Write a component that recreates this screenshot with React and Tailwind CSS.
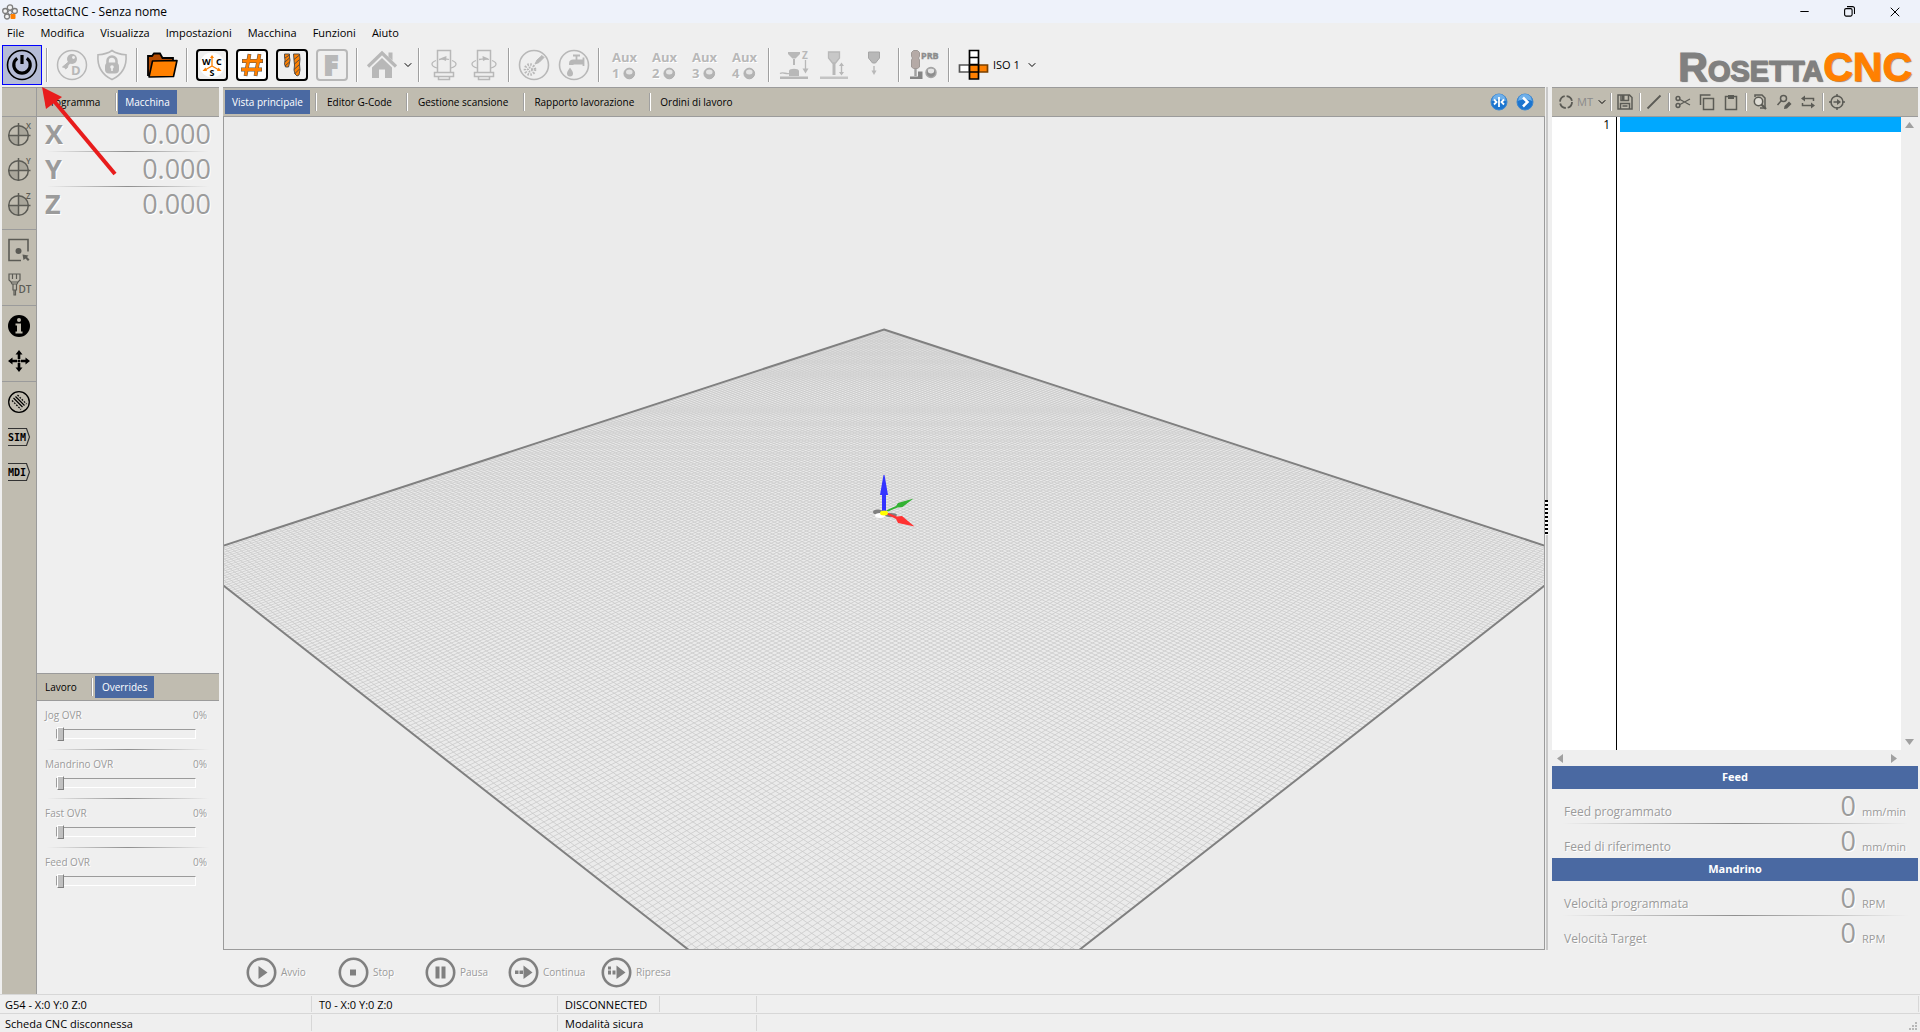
import React from 'react';
import { ChevronDown, Minus, X } from 'lucide-react';

const GREY = '#b8b8b8';
const ORANGE = '#ff8000';

/* ---------- shared bits ---------- */

const ToolSeparator = () => (
  <div className="w-[10px] h-[34px] flex justify-center shrink-0">
    <div className="w-[2px] bg-[#a0a0a0] border-r border-white" />
  </div>
);

const BarSeparator = () => (
  <div className="w-[5px] h-[18px] flex justify-center shrink-0">
    <div className="w-[2px] bg-[#a0a0a0] border-r border-white" />
  </div>
);

const Divider = () => (
  <div className="h-px mx-[10px] bg-linear-to-r from-transparent via-[#8f8f8f] to-transparent" />
);

const ToolButton = ({ label, active, children }) => (
  <button
    type="button"
    aria-label={label}
    className={
      active
        ? 'w-10 h-10 shrink-0 flex items-center justify-center bg-[#b5bcd6] border border-[#0000ff]'
        : 'w-10 h-10 shrink-0 flex items-center justify-center'
    }
  >
    {children}
  </button>
);

const Icon = ({ size = 32, children }) => (
  <svg width={size} height={size} viewBox={`0 0 ${size} ${size}`} fill="none" className="shrink-0 overflow-visible">
    {children}
  </svg>
);

const Tab = ({ active, children }) => (
  <button
    type="button"
    role="tab"
    aria-selected={!!active}
    className={
      active
        ? 'self-stretch my-[2px] px-[7px] text-[10px] whitespace-nowrap bg-[#4a69a2] text-white'
        : 'self-stretch my-[2px] pl-2 pr-[13px] text-[10px] whitespace-nowrap text-black'
    }
  >
    {children}
  </button>
);

/* ---------- toolbar icons ---------- */

const PowerIcon = () => (
  <Icon>
    <circle cx="16" cy="16" r="14.5" stroke="#000" strokeWidth="1.6" />
    <path d="M11.2 9.2a8.2 8.2 0 1 0 9.6 0" stroke="#000" strokeWidth="3.2" />
    <path d="M16 6v9" stroke="#000" strokeWidth="3.2" />
  </Icon>
);

const KeyIcon = () => (
  <Icon>
    <circle cx="16" cy="16" r="14.5" stroke={GREY} strokeWidth="1.5" />
    <circle cx="16" cy="10" r="5" fill={GREY} />
    <circle cx="17.5" cy="8.5" r="1.4" fill="#efefef" />
    <path d="M13 12.5 6.5 18l2.5.5.5 1.5 2-1.5.5-2.5 3-2.5z" fill={GREY} stroke={GREY} />
    <text x="15" y="26" fontSize="13" fontWeight="700" fill={GREY}>D</text>
  </Icon>
);

const ShieldIcon = () => (
  <Icon>
    <path d="M16 1.5c4 3 9 4 14 4.2 1 12-4 20-14 24.8C6 25.7 1 17.7 2 5.7c5-.2 10-1.2 14-4.2z" stroke={GREY} strokeWidth="1.6" />
    <path d="M11.5 15v-3a4.5 4.5 0 0 1 9 0v3" stroke={GREY} strokeWidth="2.6" />
    <rect x="9" y="13.5" width="14" height="11" rx="4" fill={GREY} />
    <circle cx="16" cy="18" r="1.8" fill="#efefef" />
    <path d="M16 18v4" stroke="#efefef" strokeWidth="1.6" />
  </Icon>
);

const FolderIcon = () => (
  <Icon>
    <path d="M2 27V7h4l2-2.5h6L16.5 9H27v5" fill="#b34a00" stroke="#000" strokeWidth="1.8" />
    <path d="M6.5 12 31 11.5 27.5 27.5 3 28z" fill={ORANGE} stroke="#000" strokeWidth="1.6" strokeLinejoin="round" />
  </Icon>
);

const Framed = ({ color = '#000', fill = '#fff', children }) => (
  <Icon>
    <rect x="1" y="1" width="30" height="30" rx="3" fill={fill} stroke={color} strokeWidth="2" />
    {children}
  </Icon>
);

const WcsIcon = () => (
  <Framed fill="#efefef">
    <circle cx="16" cy="16" r="12.5" fill="#fff" />
    <path d="M16 17V8M16 17l-7 4M16 17l7 4" stroke={ORANGE} strokeWidth="1.3" />
    <path d="m14 9 2-3 2 3zM9.5 18.500 6.500 22H11zM22.5 18.500 25.500 22H21z" fill={ORANGE} />
    <g fontSize="9" fontWeight="700" fill="#000">
      <text x="6" y="16">W</text>
      <text x="20" y="16">C</text>
      <text x="13.5" y="27">S</text>
    </g>
  </Framed>
);

const HashIcon = () => (
  <Framed>
    <path d="M13.5 5 9.5 27M23.5 5l-4 22M6 12h21M5 20.5h21" stroke="#555" strokeWidth="3.8" />
    <path d="M13.5 5.5 9.5 26.5M23.5 5.5l-4 21M6.5 12h20M5.5 20.5h20" stroke={ORANGE} strokeWidth="2.8" />
  </Framed>
);

const DrillIcon = () => (
  <Framed fill="#efefef">
    <g stroke="#444" strokeWidth="0.9" fill={ORANGE}>
      <path d="M8.5 5h5v3l.5 3-.5 3-1 4h-3l-1-3 .5-4-.5-3z" />
      <path d="M17.5 5h6l.5 5-.5 5 .5 6-1 5-2 1-2-2-1-4 .5-5-.5-5z" />
      <path d="m9 9 4.500-3M9 13l4.500-4M9 17l4.500-4M18 10.500 23.500 6M18 15.500l5.500-5M18 20.500l5.500-5M18.500 25l5-5" />
    </g>
  </Framed>
);

const FIcon = () => (
  <Framed color={GREY} fill="#efefef">
    <text x="8" y="25.5" fontSize="26" fontWeight="800" fill={GREY} stroke={GREY} strokeWidth="2">F</text>
  </Framed>
);

const HomeIcon = () => (
  <Icon>
    <path d="M2 17.5 16 4l14 13.5" stroke={GREY} strokeWidth="3.2" />
    <path d="M22.5 3.5h4v8l-4-3.5z" fill={GREY} />
    <path d="M6 18.5 16 9l10 9.5V29h-7v-8.5h-6V29H6z" fill={GREY} />
  </Icon>
);

const SpindleIcon = ({ reverse }) => (
  <Icon>
    <path d="M9.5 23V1.5h13V23" stroke={GREY} strokeWidth="1.5" />
    <rect x="6.5" y="23.5" width="19" height="4" stroke={GREY} strokeWidth="1.5" />
    <path d="M10.5 28v2.5h11V28" stroke={GREY} strokeWidth="1.5" />
    <path d="M8 11.5c-5.5 2-5.5 5.5 1 7.5M24 11.5c5.5 2 5.5 5.5-1 7.5M11 10.5c4-1 7-1 10 0" stroke={GREY} strokeWidth="1.3" />
    {reverse ? <path d="m20.5 9.5-6-2.5.5 5z" fill={GREY} /> : <path d="m12 9.5 6.5-2.5-.5 5z" fill={GREY} />}
  </Icon>
);

const MistIcon = () => (
  <Icon>
    <circle cx="16" cy="16" r="14.5" stroke={GREY} strokeWidth="1.6" />
    <path d="m17 15 2-4 5-4.5 2 2L21 13.5z" fill={GREY} stroke={GREY} />
    <circle cx="12" cy="20.5" r="5" stroke={GREY} strokeWidth="2.6" strokeDasharray="1.5 1.4" />
    <circle cx="12" cy="20.5" r="2" stroke={GREY} strokeWidth="2" strokeDasharray="1.5 1" />
  </Icon>
);

const TapIcon = () => (
  <Icon>
    <circle cx="16" cy="16" r="14.5" stroke={GREY} strokeWidth="1.6" />
    <path d="M11 16v-1.5c0-3 2-4 4-4h10v5h-9.500v.5z" fill={GREY} />
    <path d="M15 6.5h7M18.5 6.5V11M25.5 8.5V17" stroke={GREY} strokeWidth="1.8" />
    <path d="M12 18.5c2 3 3 4.500 3 6a3 3 0 0 1-6 0c0-1.500 1-3 3-6z" fill={GREY} />
  </Icon>
);

const Led = () => (
  <svg width="13" height="13" viewBox="0 0 13 13">
    <circle cx="6.5" cy="6.5" r="5.5" fill="#b4b4b4" stroke="#adadad" />
    <ellipse cx="6.5" cy="5" rx="3.4" ry="2.6" fill="#e4e4e4" />
  </svg>
);

const AuxLabel = ({ n }) => (
  <span className="w-6 flex flex-col text-[13px] leading-[16px] font-bold text-[#b8b8b8] [text-shadow:1px_1px_0_#fff]">
    <span>Aux</span>
    <span className="flex items-center gap-1">
      {n}
      <Led />
    </span>
  </span>
);

const ProbeZIcon = () => (
  <Icon>
    <path d="M10 3h12v2l-4.5 4.5h-3L10 5zM15 10h2v6h-2z" fill={GREY} />
    <path d="M11 27v-5c0-3 10-3 10 0v5zM2 27.5h28V30H2z" fill={GREY} />
    <path d="M2 24.5c3-2 6 1 9 0M27.5 11v10" stroke={GREY} strokeWidth="1.3" />
    <path d="M24.5 19.5h6l-3 5z" fill={GREY} />
    <text x="24" y="9.5" fontSize="10" fontWeight="700" fill={GREY}>Z</text>
  </Icon>
);

const ToolLengthIcon = () => (
  <Icon>
    <path d="M10.5 3h11v6l-4 5h-3l-4-5z" fill="#c8c8c8" stroke={GREY} strokeWidth="1.3" />
    <path d="M14.5 14h3v12h-3z" fill={GREY} />
    <path d="M2 27.5h28V30H2z" fill="#c4c4c4" />
    <path d="M23.5 15v10" stroke={GREY} strokeWidth="1.4" />
    <path d="m21 17 2.5-3.5L26 17zM21 23l2.5 3.5L26 23z" fill={GREY} />
  </Icon>
);

const ToolDropIcon = () => (
  <Icon>
    <path d="M10.5 3h11v6l-4 5h-3l-4-5z" fill={GREY} stroke="#a5a5a5" />
    <path d="M16 17v5" stroke={GREY} strokeWidth="1.4" />
    <path d="M13.5 21.5h5L16 26z" fill={GREY} />
  </Icon>
);

const ProbeIcon = () => (
  <Icon>
    <path d="m3.5 3.5 2-2h4l2 2v4l-1 1.5 1 2v7l-2 1.5h-4l-2-1.5v-7l1-2-1-1.5z" fill="#b5aaa6" stroke="#9f9996" />
    <path d="M7.5 20v7" stroke="#a0a0a0" strokeWidth="2.4" />
    <path d="M2 27.5h8v-5h4.5V30H2z" fill="#858585" />
    <text x="13" y="9.5" fontSize="9" fontWeight="700" fill="#8c8c8c" stroke="#8c8c8c" strokeWidth="0.4">PRB</text>
    <circle cx="23" cy="23.5" r="5" fill="#8d8d8d" stroke="#a5a5a5" strokeWidth="1.5" />
    <ellipse cx="23" cy="22" rx="3.2" ry="2.4" fill="#e4e4e4" />
  </Icon>
);

const IsoIcon = () => (
  <Icon>
    <g stroke="#000" strokeWidth="1.7">
      <path d="M11.5 1.5h9v7h-9zM11.5 8.5h9v7h-9z" fill="#fff" />
      <path d="M1.5 16h10v7h-10z" fill="#fff" stroke="#555" />
      <path d="M20.5 16h9v7h-9z" fill={ORANGE} stroke="#7a4000" />
      <path d="M11.5 16h9v7h-9zM11.5 23h9v7h-9z" fill={ORANGE} />
    </g>
  </Icon>
);

/* ---------- side bar icons ---------- */

const OriginIcon = ({ axis }) => (
  <Icon size={26}>
    <path d="M12.5 5a9.5 9.5 0 0 1 9.5 9.5h-9.5zM12.5 14.5V24A9.5 9.5 0 0 1 3 14.5z" fill="#a9a69b" />
    <circle cx="12.5" cy="14.5" r="9.8" stroke="#5b5b55" strokeWidth="1.5" />
    <path d="M12.5 2v23M2 14.5h22.500" stroke="#5b5b55" strokeWidth="1.5" />
    <text x="20" y="8" fontSize="8" fontWeight="600" fill="#5b5b55">{axis}</text>
  </Icon>
);

const SheetIcon = () => (
  <Icon size={26}>
    <path d="M22 14.5v-12H3v21h12" stroke="#5b5b55" strokeWidth="1.6" />
    <circle cx="12.5" cy="14" r="3" fill="#5b5b55" />
    <path d="m16.5 17.5 6 1L21 20l2.5 2.5L22 24l-2.500-2.500-2 1.500z" fill="#5b5b55" />
  </Icon>
);

const ToolDtIcon = () => (
  <Icon size={26}>
    <path d="M3 2h11v6l-2 2H5L3 8zM6.5 2v5M10.500 2v5M5 10l1 2h5l1-2M7 12v6h3.500v-6M8 18v5h1.500v-5" stroke="#5b5b55" strokeWidth="1.2" />
    <text x="12.5" y="21" fontSize="10" fontWeight="600" fill="#5b5b55">DT</text>
  </Icon>
);

const InfoIcon = () => (
  <Icon size={26}>
    <circle cx="13" cy="13" r="11" fill="#000" />
    <circle cx="13" cy="7" r="2" fill="#c0bcb0" />
    <path d="M9.5 10.5H15v8h1.500v2h-7v-2H11v-6H9.500z" fill="#c0bcb0" />
  </Icon>
);

const MoveIcon = () => (
  <Icon size={26}>
    <path d="M13 5v6M13 15v6M5 13h6M15 13h6" stroke="#000" strokeWidth="2.6" />
    <path d="M13 2 9.5 6.5h7zM13 24l-3.5-4.5h7zM2 13l4.5-3.5v7zM24 13l-4.5-3.5v7z" fill="#000" />
    <circle cx="13" cy="13" r="1.6" fill="#000" />
  </Icon>
);

const HatchIcon = () => (
  <Icon size={26}>
    <circle cx="13" cy="13" r="10.3" stroke="#000" strokeWidth="1.3" />
    <path d="m7.5 9 9 9M9.5 7.5l9 9" stroke="#000" strokeWidth="1.2" />
    <path d="m6 11.5 9 9M11.5 6l9 9" stroke="#000" strokeWidth="1.2" strokeDasharray="1.8 1.2" />
  </Icon>
);

const TagIcon = ({ text }) => (
  <Icon size={26}>
    <path d="M2 4.5h18.500L23.500 13l-3 8.500H2" stroke="#333" strokeWidth="1.2" />
    <text x="2" y="16.5" fontSize="10" fontWeight="700" fill="#000" fontFamily="DejaVu Sans Mono, monospace">{text}</text>
  </Icon>
);

/* ---------- header ---------- */

const TitleBar = () => (
  <header className="h-[23px] shrink-0 flex items-center bg-[#eef2fa] pl-[2px]">
    <svg width="16" height="16" viewBox="0 0 16 16" fill="none" className="shrink-0">
      <g stroke="#7d7d7d" strokeWidth="1.3" fill="#f3f3f3">
        <circle cx="8" cy="3.5" r="2.7" />
        <circle cx="3.2" cy="7" r="2.5" />
        <circle cx="12.8" cy="7" r="2.5" />
        <circle cx="5" cy="12.5" r="2.5" />
      </g>
      <circle cx="8" cy="8.5" r="2" stroke="#7d7d7d" />
      <rect x="8.5" y="10" width="5" height="5" rx="1" fill={ORANGE} />
    </svg>
    <h1 className="ml-1 text-[12px]">RosettaCNC - Senza nome</h1>
    <div className="ml-auto mr-[2px] flex">
      <button type="button" aria-label="Riduci" className="w-[46px] flex items-center justify-center"><Minus size={13} strokeWidth={2} /></button>
      <button type="button" aria-label="Ripristina" className="w-[45px] flex items-center justify-center">
        <svg width="11" height="11" viewBox="0 0 11 11" fill="none" stroke="#000" strokeWidth="1.1">
          <rect x="0.6" y="2.6" width="7.5" height="7.5" rx="1.5" />
          <path d="M3 .6h5.500a2 2 0 0 1 2 2V8" />
        </svg>
      </button>
      <button type="button" aria-label="Chiudi" className="w-[46px] flex items-center justify-center"><X size={16} strokeWidth={1.5} /></button>
    </div>
  </header>
);

const MENU = ['File', 'Modifica', 'Visualizza', 'Impostazioni', 'Macchina', 'Funzioni', 'Aiuto'];

const MenuBar = () => (
  <nav className="h-5 shrink-0 flex items-center gap-4 pl-[7px] text-[11px]">
    {MENU.map((item) => (
      <button type="button" key={item}>{item}</button>
    ))}
  </nav>
);

const Toolbar = () => (
  <div className="h-11 shrink-0 flex items-center pl-[2px] pr-2">
    <ToolButton label="Connetti" active><PowerIcon /></ToolButton>
    <ToolSeparator />
    <ToolButton label="Chiave"><KeyIcon /></ToolButton>
    <ToolButton label="Sicurezza"><ShieldIcon /></ToolButton>
    <ToolSeparator />
    <ToolButton label="Apri"><FolderIcon /></ToolButton>
    <ToolSeparator />
    <ToolButton label="WCS"><WcsIcon /></ToolButton>
    <ToolButton label="Parametri"><HashIcon /></ToolButton>
    <ToolButton label="Utensili"><DrillIcon /></ToolButton>
    <ToolButton label="Funzioni"><FIcon /></ToolButton>
    <ToolSeparator />
    <ToolButton label="Home"><HomeIcon /></ToolButton>
    <button type="button" aria-label="Opzioni home" className="w-3"><ChevronDown size={12} strokeWidth={2} /></button>
    <ToolSeparator />
    <ToolButton label="Mandrino antiorario"><SpindleIcon /></ToolButton>
    <ToolButton label="Mandrino orario"><SpindleIcon reverse /></ToolButton>
    <ToolSeparator />
    <ToolButton label="Nebbia"><MistIcon /></ToolButton>
    <ToolButton label="Refrigerante"><TapIcon /></ToolButton>
    <ToolSeparator />
    {[1, 2, 3, 4].map((n) => (
      <ToolButton key={n} label={`Aux ${n}`}><AuxLabel n={n} /></ToolButton>
    ))}
    <ToolSeparator />
    <ToolButton label="Tastatore Z"><ProbeZIcon /></ToolButton>
    <ToolButton label="Lunghezza utensile"><ToolLengthIcon /></ToolButton>
    <ToolButton label="Cambio utensile"><ToolDropIcon /></ToolButton>
    <ToolSeparator />
    <ToolButton label="Sonda"><ProbeIcon /></ToolButton>
    <ToolSeparator />
    <button type="button" className="flex items-center pl-1 text-[11px]">
      <IsoIcon />
      <span className="ml-[3px] mr-[6px]">ISO 1</span>
      <ChevronDown size={12} strokeWidth={2} />
    </button>
    <div className="ml-auto flex items-baseline h-10 leading-[44px] [font-family:'Liberation_Sans',sans-serif] font-bold text-[#808080] [-webkit-text-stroke:1px_currentColor] [text-shadow:1px_1px_1px_#777]">
      <span className="text-[41px]">R</span>
      <span className="text-[29px]">OSETTA</span>
      <span className="text-[41px] text-[#ff8000]">CNC</span>
    </div>
  </div>
);

/* ---------- left side ---------- */

const SideButton = ({ label, children }) => (
  <button type="button" aria-label={label} className="h-[35px] w-full flex items-center justify-center">
    {children}
  </button>
);

const SideBar = () => (
  <aside className="w-[35px] shrink-0 bg-[#c0bcb0] border-t border-r border-[#9b9b9b]">
    <div className="h-[29px] border-b border-[#9b9b9b]" />
    <div className="-mt-px pb-2">
      <SideButton label="Azzera X"><OriginIcon axis="X" /></SideButton>
      <SideButton label="Azzera Y"><OriginIcon axis="Y" /></SideButton>
      <SideButton label="Azzera Z"><OriginIcon axis="Z" /></SideButton>
    </div>
    <div className="pt-[2px] pb-[3px] border-t border-[#9b9b9b]">
      <SideButton label="Punto pezzo"><SheetIcon /></SideButton>
      <SideButton label="Utensile DT"><ToolDtIcon /></SideButton>
    </div>
    <div className="pt-[2px] pb-[3px] border-t border-[#9b9b9b]">
      <SideButton label="Informazioni"><InfoIcon /></SideButton>
      <SideButton label="Jog"><MoveIcon /></SideButton>
    </div>
    <div className="pt-[2px] border-t border-[#9b9b9b]">
      <SideButton label="Percorso"><HatchIcon /></SideButton>
      <SideButton label="Simulazione"><TagIcon text="SIM" /></SideButton>
      <SideButton label="MDI"><TagIcon text="MDI" /></SideButton>
    </div>
  </aside>
);

const OVERRIDES = ['Jog OVR', 'Mandrino OVR', 'Fast OVR', 'Feed OVR'];

const Override = ({ name }) => {
  const id = name.toLowerCase().replace(' ', '-');
  return (
    <div className="h-12 pt-[6px] pl-2 pr-3 text-[10px] leading-[16px] text-[#9b9b9b] [text-shadow:1px_1px_0_#fff]">
      <div className="flex justify-between">
        <label htmlFor={id}>{name}</label>
        <span>0%</span>
      </div>
      <input
        id={id}
        type="range"
        min="0"
        max="200"
        defaultValue="0"
        className="block ml-[11px] mt-1 w-[140px] h-[14px] appearance-none bg-transparent [&::-webkit-slider-runnable-track]:h-[10px] [&::-webkit-slider-runnable-track]:border [&::-webkit-slider-runnable-track]:border-t-[#9b9b9b] [&::-webkit-slider-runnable-track]:border-l-[#9b9b9b] [&::-webkit-slider-runnable-track]:border-r-white [&::-webkit-slider-runnable-track]:border-b-white [&::-webkit-slider-thumb]:appearance-none [&::-webkit-slider-thumb]:w-[7px] [&::-webkit-slider-thumb]:h-[14px] [&::-webkit-slider-thumb]:-mt-[3px] [&::-webkit-slider-thumb]:bg-[#c0c0c0] [&::-webkit-slider-thumb]:border [&::-webkit-slider-thumb]:border-t-white [&::-webkit-slider-thumb]:border-l-white [&::-webkit-slider-thumb]:border-r-[#808080] [&::-webkit-slider-thumb]:border-b-[#808080]"
      />
    </div>
  );
};

const MachinePanel = () => (
  <section className="w-[182px] shrink-0 flex flex-col">
    <div role="tablist" className="h-[30px] flex items-center bg-[#c0bcb0] border-y border-[#9b9b9b]">
      <Tab>Programma</Tab>
      <BarSeparator />
      <Tab active>Macchina</Tab>
    </div>
    {['X', 'Y', 'Z'].map((axis, i) => (
      <React.Fragment key={axis}>
        {i > 0 && <Divider />}
        <div className="flex items-baseline justify-between h-[34px] px-2 leading-[34px] text-[27px] text-[#9b9b9b] [text-shadow:1px_1px_0_#fff]">
          <span className="font-bold">{axis}</span>
          <span>0.000</span>
        </div>
      </React.Fragment>
    ))}
    <div role="tablist" className="mt-auto h-7 shrink-0 flex items-center bg-[#c0bcb0] border-y border-[#9b9b9b]">
      <Tab>Lavoro</Tab>
      <BarSeparator />
      <Tab active>Overrides</Tab>
    </div>
    <div className="h-[293px] shrink-0">
      {OVERRIDES.map((name, i) => (
        <React.Fragment key={name}>
          {i > 0 && <Divider />}
          <Override name={name} />
        </React.Fragment>
      ))}
    </div>
  </section>
);

/* ---------- viewport ---------- */

// Corners of the work plane and the weight of the side corners in the perspective
const TOP = [660, 212.5];
const RIGHT = [1356.5, 440.4];
const LEFT = [-36.5, 440.4];
const WEIGHT = 0.7089;
const CELLS = 200;

const project = (u, v) => {
  const w = 1 + (u + v) * (WEIGHT - 1);
  return [0, 1]
    .map((k) => ((TOP[k] + u * (WEIGHT * RIGHT[k] - TOP[k]) + v * (WEIGHT * LEFT[k] - TOP[k])) / w).toFixed(2))
    .join(' ');
};

const gridPath = () => {
  const parts = [];
  for (let i = 0; i <= CELLS; i += 1) {
    const t = i / CELLS;
    parts.push(`M${project(t, 0)}L${project(t, 1)}M${project(0, t)}L${project(1, t)}`);
  }
  return parts.join('');
};

const outline = `M${project(0, 0)}L${project(1, 0)}L${project(1, 1)}L${project(0, 1)}Z`;

const Viewport = () => (
  <div className="flex-1 min-h-0 bg-[#ebebeb] border-x border-b border-[#9b9b9b]">
    <svg viewBox="0 0 1320 832" preserveAspectRatio="xMidYMid slice" className="block w-full h-full" fill="none">
      <path d={gridPath()} stroke="#cacaca" strokeWidth="0.8" />
      <path d={outline} stroke="#808080" strokeWidth="2" />
      {/* axes */}
      <g transform="translate(0 1)">
        <ellipse cx="654" cy="394" rx="5" ry="2.5" fill="#808080" />
        <ellipse cx="667" cy="397" rx="6" ry="2" fill="#808080" />
        <ellipse cx="656" cy="397.5" rx="5" ry="2.5" fill="#fff" />
        <path d="M662 392.5 672 388l2-3 15.500-4.500-11 8.500-5 .5-9.500 4z" fill="#33b233" />
        <path d="m662 396 10 5 2 4 16.500 3.500L678 398l-5 .5-10-4z" fill="#ff3333" />
        <path d="M658 393v-16h-2l3.500-20h1L664 377h-2v16z" fill="#3333ff" />
        <ellipse cx="660" cy="395" rx="4" ry="2.5" fill="#ffff00" />
      </g>
    </svg>
  </div>
);

const Orb = ({ children }) => (
  <svg width="18" height="18" viewBox="0 0 18 18" fill="none" stroke="#fff" strokeWidth="1.8">
    <circle cx="9" cy="9" r="8" fill="#1c75cf" stroke="#3d87d0" strokeWidth="1" />
    <path d="M2 8a7 7 0 0 1 14 0c-4-2-10-2-14 0z" fill="#6fb0ea" stroke="none" />
    {children}
  </svg>
);

const VIEW_TABS = ['Vista principale', 'Editor G-Code', 'Gestione scansione', 'Rapporto lavorazione', 'Ordini di lavoro'];

const PLAYER = [
  { label: 'Avvio', width: 'w-[92px]', icon: <path d="M12.5 9v13l9-6.500z" fill="#808080" /> },
  { label: 'Stop', width: 'w-[87px]', icon: <path d="M12 12.5h6v6h-6z" fill="#808080" /> },
  { label: 'Pausa', width: 'w-[83px]', icon: <path d="M10.5 9.5h4v12h-4zM16.5 9.5h4v12h-4z" fill="#808080" /> },
  { label: 'Continua', width: 'w-[93px]', icon: <path d="M7 13.5h3.500V17H7zM11.500 13.500H15V17h-3.500zM15.500 8.500V22l9-6.500z" fill="#808080" /> },
  { label: 'Ripresa', width: 'w-[93px]', icon: <path d="M7 9.5h3v3H7zM7 13.500h3v4H7zM11.500 13.500h3v4h-3zM15.500 8.500V22l9-6.500z" fill="#808080" /> },
];

const MainArea = () => (
  <main className="flex-1 min-w-0 flex flex-col">
    <div className="h-[30px] shrink-0 flex items-center bg-[#c0bcb0] border-y border-[#9b9b9b] pl-[2px] pr-[11px]">
      <div role="tablist" className="h-full flex items-center">
        {VIEW_TABS.map((tab, i) => (
          <React.Fragment key={tab}>
            {i === 1 && <div className="w-1" />}
            {i > 0 && <BarSeparator />}
            <Tab active={i === 0}>{tab}</Tab>
          </React.Fragment>
        ))}
      </div>
      <div className="ml-auto flex gap-2">
        <button type="button" aria-label="Centra"><Orb><path d="M9 4v10M4 6.5 6.5 9 4 11.5M14 6.5 11.5 9l2.5 2.5" /></Orb></button>
        <button type="button" aria-label="Avanti"><Orb><path d="M7 4.5 11.5 9 7 13.5" strokeWidth="2.5" /></Orb></button>
      </div>
    </div>
    <Viewport />
    <div className="h-11 shrink-0 flex items-center pl-[23px]">
      {PLAYER.map(({ label, width, icon }) => (
        <button
          type="button"
          key={label}
          className={`${width} flex items-center gap-1 text-[10px] text-[#9b9b9b] [text-shadow:1px_1px_0_#fff]`}
        >
          <svg width="31" height="31" viewBox="0 0 31 31" fill="none" className="shrink-0">
            <circle cx="15.5" cy="15.5" r="13.7" stroke="#808080" strokeWidth="2.6" />
            {icon}
          </svg>
          {label}
        </button>
      ))}
    </div>
  </main>
);

const Splitter = () => (
  <div className="w-[7px] shrink-0 mb-11 flex items-center pl-px">
    <div className="relative w-[2px] h-full bg-[#c8c8c8]">
      <div className="absolute right-0 w-[3px] top-[413px] h-[35px] bg-[repeating-linear-gradient(#000_0_2px,#fff_2px_4px)]" />
    </div>
  </div>
);

/* ---------- right side ---------- */

const EditorButton = ({ label, children }) => (
  <button type="button" aria-label={label} className="w-6 h-6 flex items-center justify-center">
    <svg width="18" height="18" viewBox="0 0 18 18" fill="none" stroke="#5b5b55" strokeWidth="1.5">
      {children}
    </svg>
  </button>
);

const EditorToolbar = () => (
  <div className="h-[30px] shrink-0 flex items-center bg-[#c0bcb0] border-y border-[#9b9b9b]">
    <button type="button" className="w-14 flex items-center pl-[6px] text-[11px] text-[#8a8a8a]">
      <svg width="16" height="16" viewBox="0 0 16 16" fill="none" className="shrink-0">
        <circle cx="8" cy="8" r="6" stroke="#5b5b55" strokeWidth="1.8" strokeDasharray="7.4 2" />
      </svg>
      <span className="ml-[3px]">MT</span>
      <ChevronDown size={12} strokeWidth={2} color="#000" className="ml-auto" />
    </button>
    <BarSeparator />
    <EditorButton label="Salva">
      <path d="M2 2h11.500L16 4.500V16H2zM5 2v5.500h7.500V2M4.500 16v-5.500h9V16M6.500 13h5" />
      <path d="M6 2h2.500v5H6z" fill="#5b5b55" stroke="none" />
    </EditorButton>
    <BarSeparator />
    <EditorButton label="Linea"><path d="M2.5 15.5 15.5 2.5" strokeWidth="1.8" /></EditorButton>
    <BarSeparator />
    <EditorButton label="Taglia">
      <circle cx="4" cy="5.5" r="1.9" />
      <circle cx="4" cy="12.5" r="1.9" />
      <path d="m6 6.5 10 5.500M6 11.500 16 6" strokeWidth="1.3" />
    </EditorButton>
    <EditorButton label="Copia"><path d="M5.5 5.5h10v11h-10zM2.5 12V2h10" /></EditorButton>
    <EditorButton label="Incolla">
      <path d="M3.5 3.5h11v13h-11z" />
      <path d="M6 2h6v4H6z" fill="#5b5b55" stroke="none" />
    </EditorButton>
    <BarSeparator />
    <EditorButton label="Cerca">
      <path d="M9 15h5V5l-3-3H4v2" />
      <circle cx="7.5" cy="8.5" r="4.2" fill="#dedcd5" />
      <path d="m10.5 11.5 4.500 4.500" strokeWidth="2.2" />
    </EditorButton>
    <EditorButton label="Sostituisci">
      <circle cx="8.5" cy="5.5" r="3" />
      <path d="M6.5 7.5 2.5 12" />
      <path d="m9 16 .5-3L14 8.500l2.500 2.500-4.500 4.500z" fill="#5b5b55" stroke="none" />
    </EditorButton>
    <EditorButton label="Scambia">
      <path d="M5 5.5h9.500V8M13 12.500H3.500V10" />
      <path d="m2 5.5 4-3v6zM16 12.500l-4-3v6z" fill="#5b5b55" stroke="none" />
    </EditorButton>
    <BarSeparator />
    <EditorButton label="Vai a">
      <circle cx="9" cy="9" r="6" />
      <path d="M9 1v3M9 14v3M1 9h3M14 9h3M5.5 9H10" />
      <path d="m9 6 4 3-4 3z" fill="#5b5b55" stroke="none" />
    </EditorButton>
  </div>
);

const Arrow = ({ label, points }) => (
  <button type="button" aria-label={label}>
    <svg width="9" height="9" viewBox="0 0 9 9"><polygon points={points} fill="#a0a0a0" /></svg>
  </button>
);

const CodeEditor = () => (
  <div className="flex-1 min-h-0 flex flex-col">
    <div className="flex-1 min-h-0 flex">
      <div className="w-[65px] shrink-0 pr-[6px] bg-white border-r border-black text-right text-[12px] leading-[16px]">1</div>
      <textarea
        aria-label="Editor G-Code"
        className="flex-1 min-w-0 resize-none border-l-[3px] border-white bg-white bg-[linear-gradient(#00a8ff,#00a8ff)] bg-[length:100%_15px] bg-no-repeat text-[12px] leading-[15px] outline-none"
      />
      <div className="w-[17px] shrink-0 flex flex-col items-center justify-between py-1">
        <Arrow label="Su" points="0,7 4.5,1 9,7" />
        <Arrow label="Giù" points="0,2 4.5,8 9,2" />
      </div>
    </div>
    <div className="h-4 shrink-0 flex items-center justify-between pl-1 pr-5">
      <Arrow label="Sinistra" points="7,0 1,4.5 7,9" />
      <Arrow label="Destra" points="2,0 8,4.5 2,9" />
    </div>
  </div>
);

const Readout = ({ label, unit }) => (
  <div className="h-[34px] flex items-baseline pl-3 leading-[34px] text-[12px] text-[#9b9b9b] [text-shadow:1px_1px_0_#fff]">
    <span>{label}</span>
    <span className="ml-auto text-[27px]">0</span>
    <span className="w-14 ml-[6px] text-[11px]">{unit}</span>
  </div>
);

const ReadoutGroup = ({ title, unit, rows }) => (
  <div>
    <h2 className="h-[23px] flex items-center justify-center bg-[#4a69a2] text-white text-[11px] font-bold">{title}</h2>
    <Readout label={rows[0]} unit={unit} />
    <Divider />
    <Readout label={rows[1]} unit={unit} />
  </div>
);

const RightPanel = () => (
  <section className="w-[366px] mr-[2px] shrink-0 flex flex-col">
    <EditorToolbar />
    <CodeEditor />
    <div className="h-[228px] shrink-0">
      <ReadoutGroup title="Feed" unit="mm/min" rows={['Feed programmato', 'Feed di riferimento']} />
      <ReadoutGroup title="Mandrino" unit="RPM" rows={['Velocità programmata', 'Velocità Target']} />
    </div>
  </section>
);

/* ---------- status bar ---------- */

const StatusBar = () => (
  <footer className="shrink-0 text-[11px] leading-[17px]">
    <div className="h-[19px] flex py-px border-t border-[#d7d7d7]">
      <div className="w-[312px] pl-[5px] border-r border-[#d7d7d7]">G54 - X:0 Y:0 Z:0</div>
      <div className="w-[246px] pl-[7px] border-r border-[#d7d7d7]">T0 - X:0 Y:0 Z:0</div>
      <div className="w-[102px] pl-[7px] border-r border-[#d7d7d7]">DISCONNECTED</div>
      <div className="w-[97px] border-r border-[#d7d7d7]" />
      <div className="flex-1 mr-px border-r border-[#d7d7d7]" />
    </div>
    <div className="h-[19px] flex py-px border-t border-[#d7d7d7]">
      <div className="w-[312px] pl-[5px] border-r border-[#d7d7d7]">Scheda CNC disconnessa</div>
      <div className="w-[246px] border-r border-[#d7d7d7]" />
      <div className="w-[199px] pl-[7px] border-r border-[#d7d7d7]">Modalità sicura</div>
      <svg width="9" height="9" viewBox="0 0 9 9" className="ml-auto mr-[2px] self-end" fill="#b8b8b8">
        <path d="M6 0h2v2H6zM3 3h2v2H3zM6 3h2v2H6zM0 6h2v2H0zM3 6h2v2H3zM6 6h2v2H6z" />
      </svg>
    </div>
  </footer>
);

const App = () => (
  <div className="relative h-screen flex flex-col overflow-hidden bg-[#efefef] text-black [font-family:'Open_Sans','Noto_Sans',sans-serif]">
    <TitleBar />
    <MenuBar />
    <Toolbar />
    <div className="flex-1 min-h-0 flex pl-[2px]">
      <SideBar />
      <MachinePanel />
      <div className="w-1 shrink-0" />
      <MainArea />
      <Splitter />
      <RightPanel />
    </div>
    <StatusBar />

    {/* pointer to the connect button */}
    <svg width="80" height="92" viewBox="0 0 80 92" className="absolute left-10 top-[85px] pointer-events-none">
      <path d="M14 16 75 89" stroke="#e81c1c" strokeWidth="4" />
      <path d="M2 2 22 12 6 24z" fill="#e81c1c" />
    </svg>
  </div>
);

export default App;
